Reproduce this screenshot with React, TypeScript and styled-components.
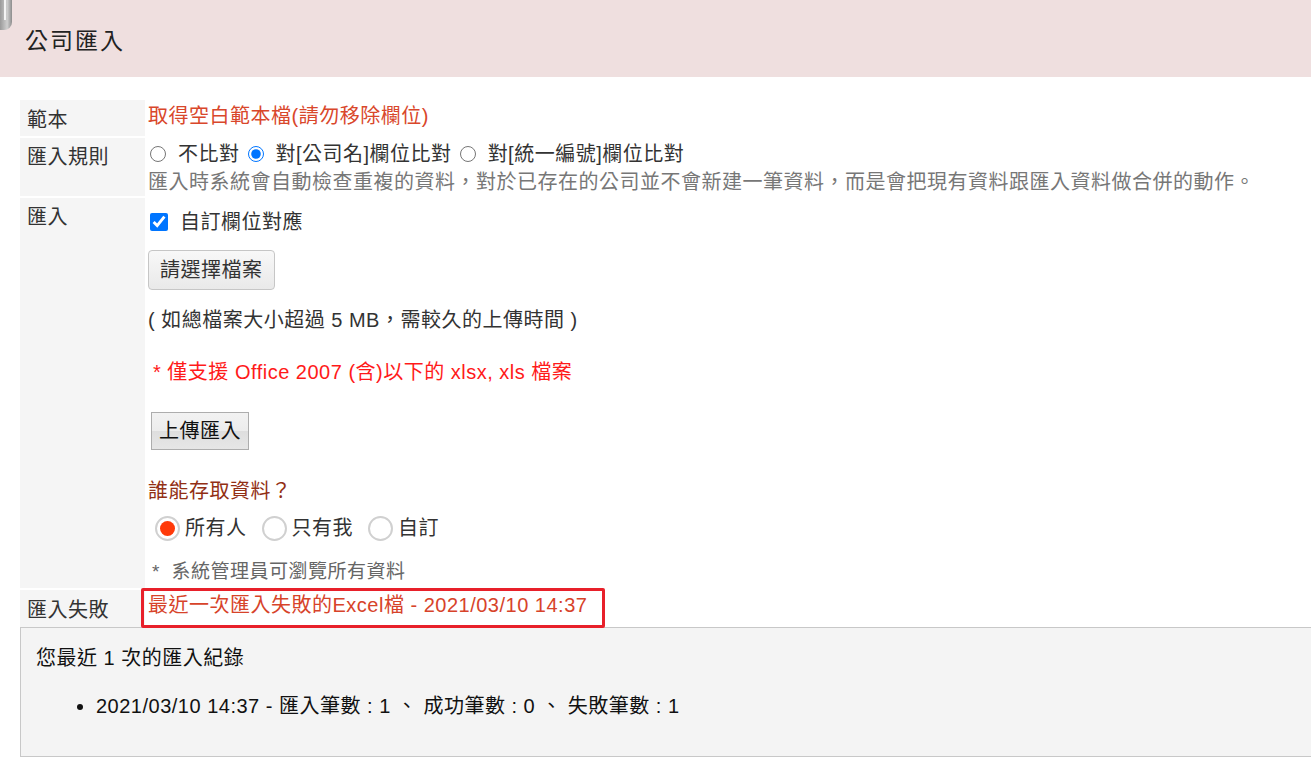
import styled, { createGlobalStyle } from 'styled-components';

const GlobalStyle = createGlobalStyle`
  html, body {
    margin: 0;
    padding: 0;
    background: #ffffff;
    overflow-x: hidden;
  }
  body {
    font-family: "Liberation Sans", "Noto Sans CJK TC", sans-serif;
    font-size: 20px;
    letter-spacing: 0.5px;
    color: #333333;
  }
`;

const Header = styled.header`
  position: relative;
  height: 77px;
  background: #efdfdf;
  display: flex;
  align-items: center;
  padding-left: 25px;
`;

const Title = styled.h1`
  margin: 0;
  font-size: 23px;
  font-weight: normal;
  color: #222222;
  letter-spacing: 2px;
`;

const ScrollNub = styled.div`
  position: absolute;
  left: 0;
  top: 0;
  width: 12px;
  height: 30px;
  border-bottom-right-radius: 8px;
  background: linear-gradient(90deg, #9a9a9a, #cfcfcf 60%, #8c8c8c);

  &::after {
    content: '';
    position: absolute;
    left: 4px;
    top: 0;
    width: 2px;
    height: 20px;
    background: #f4f4f4;
  }
`;

const Main = styled.main`
  padding: 23px 0 0 20px;
`;

const FormTable = styled.div`
  display: flex;
  flex-direction: column;
  gap: 2px;
`;

const Row = styled.div`
  display: grid;
  grid-template-columns: 125px 1fr;
  column-gap: 3px;
`;

const Label = styled.div<{ $top: number }>`
  background: #f5f5f5;
  padding: ${(p) => p.$top}px 7px 0;
  line-height: 28px;
  color: #333333;
`;

const Cell = styled.div<{ $top: number; $bottom?: number }>`
  padding: ${(p) => p.$top}px 0 ${(p) => p.$bottom ?? 0}px;
  line-height: 28px;
`;

const TemplateLink = styled.a`
  color: #d9472b;
  text-decoration: none;
`;

const RadioLine = styled.div`
  display: flex;
  align-items: center;
  height: 28px;
  color: #333333;
`;

const NativeRadio = styled.input.attrs({ type: 'radio' })`
  width: 16px;
  height: 16px;
  margin: 0 12px 0 2px;
  accent-color: #0075ff;
`;

const RadioText = styled.span`
  margin-right: 6px;
`;

const Hint = styled.div`
  color: #777777;
`;

const CheckLine = styled.label`
  display: flex;
  align-items: center;
  height: 28px;
`;

const CheckBox = styled.input.attrs({ type: 'checkbox' })`
  width: 18px;
  height: 18px;
  margin: 0 12px 0 2px;
  accent-color: #0075ff;
`;

const FileButton = styled.button`
  display: block;
  margin-top: 14px;
  height: 40px;
  padding: 0 11px;
  font: inherit;
  letter-spacing: inherit;
  color: #333333;
  border: 1px solid #c6c6c6;
  border-radius: 4px;
  background: linear-gradient(#f8f8f8, #e9e9e9);
`;

const Note = styled.div<{ $gap: number; $color?: string; $size?: number; $indent?: number }>`
  margin-top: ${(p) => p.$gap}px;
  color: ${(p) => p.$color ?? '#333333'};
  font-size: ${(p) => p.$size ?? 20}px;
  padding-left: ${(p) => p.$indent ?? 0}px;
`;

const UploadButton = styled.button`
  display: block;
  margin: 26px 0 0 3px;
  height: 38px;
  width: 98px;
  padding: 0;
  font: inherit;
  letter-spacing: inherit;
  color: #111111;
  border: 1px solid #adadad;
  border-radius: 0;
  background: linear-gradient(#f2f2f2 0%, #ececec 50%, #dedede 51%, #e6e6e6 100%);
`;

const AccessTitle = styled.div`
  margin-top: 27px;
  color: #922f14;
`;

const AccessOptions = styled.div`
  display: flex;
  align-items: center;
  margin-top: 9px;
  height: 28px;
  padding-left: 7px;
`;

const Choice = styled.span<{ $checked?: boolean }>`
  position: relative;
  box-sizing: border-box;
  width: 25px;
  height: 25px;
  border-radius: 50%;
  border: 2px solid #d0d0d0;
  background: #ffffff;
  margin-right: 5px;

  &::after {
    content: '';
    position: absolute;
    inset: 3px;
    border-radius: 50%;
    background: ${(p) => (p.$checked ? '#ff3a0a' : 'transparent')};
  }
`;

const ChoiceText = styled.span`
  margin-right: 15px;
  color: #333333;
`;

const FailLink = styled.a`
  position: relative;
  color: #d7432a;
  text-decoration: none;

  &::after {
    content: '';
    position: absolute;
    left: -7px;
    right: -18px;
    top: -6px;
    bottom: -12px;
    border: 3px solid #e8202a;
    border-radius: 2px;
  }
`;

const History = styled.section`
  background: #f4f4f4;
  border: 1px solid #c8c8c8;
  border-right: none;
  padding: 16px 0 36px 15px;
  line-height: 28px;
  color: #111111;
`;

const HistoryList = styled.ul`
  margin: 20px 0 0;
  padding-left: 60px;
`;

export default function App() {
  return (
    <>
      <GlobalStyle />
      <Header>
        <ScrollNub />
        <Title>公司匯入</Title>
      </Header>
      <Main>
        <FormTable>
          <Row>
            <Label $top={6}>範本</Label>
            <Cell $top={2} $bottom={6}>
              <TemplateLink href="#">取得空白範本檔(請勿移除欄位)</TemplateLink>
            </Cell>
          </Row>
          <Row>
            <Label $top={5}>匯入規則</Label>
            <Cell $top={2}>
              <RadioLine>
                <NativeRadio name="rule" />
                <RadioText>不比對</RadioText>
                <NativeRadio name="rule" defaultChecked />
                <RadioText>對[公司名]欄位比對</RadioText>
                <NativeRadio name="rule" />
                <RadioText>對[統一編號]欄位比對</RadioText>
              </RadioLine>
              <Hint>匯入時系統會自動檢查重複的資料，對於已存在的公司並不會新建一筆資料，而是會把現有資料跟匯入資料做合併的動作。</Hint>
            </Cell>
          </Row>
          <Row>
            <Label $top={5}>匯入</Label>
            <Cell $top={10} $bottom={2}>
              <CheckLine>
                <CheckBox defaultChecked />
                自訂欄位對應
              </CheckLine>
              <FileButton>請選擇檔案</FileButton>
              <Note $gap={16}>( 如總檔案大小超過 5 MB，需較久的上傳時間 )</Note>
              <Note $gap={24} $color="#ff1a1a" $indent={5}>* 僅支援 Office 2007 (含)以下的 xlsx, xls 檔案</Note>
              <UploadButton>上傳匯入</UploadButton>
              <AccessTitle>誰能存取資料？</AccessTitle>
              <AccessOptions>
                <Choice $checked />
                <ChoiceText>所有人</ChoiceText>
                <Choice />
                <ChoiceText>只有我</ChoiceText>
                <Choice />
                <ChoiceText>自訂</ChoiceText>
              </AccessOptions>
              <Note $gap={16} $color="#666666" $size={19} $indent={4}>*&nbsp; 系統管理員可瀏覽所有資料</Note>
            </Cell>
          </Row>
          <Row>
            <Label $top={6}>匯入失敗</Label>
            <Cell $top={1} $bottom={8}>
              <FailLink href="#">最近一次匯入失敗的Excel檔 - 2021/03/10 14:37</FailLink>
            </Cell>
          </Row>
        </FormTable>
        <History>
          <div>您最近 1 次的匯入紀錄</div>
          <HistoryList>
            <li>2021/03/10 14:37 - 匯入筆數 : 1 、 成功筆數 : 0 、 失敗筆數 : 1</li>
          </HistoryList>
        </History>
      </Main>
    </>
  );
}
